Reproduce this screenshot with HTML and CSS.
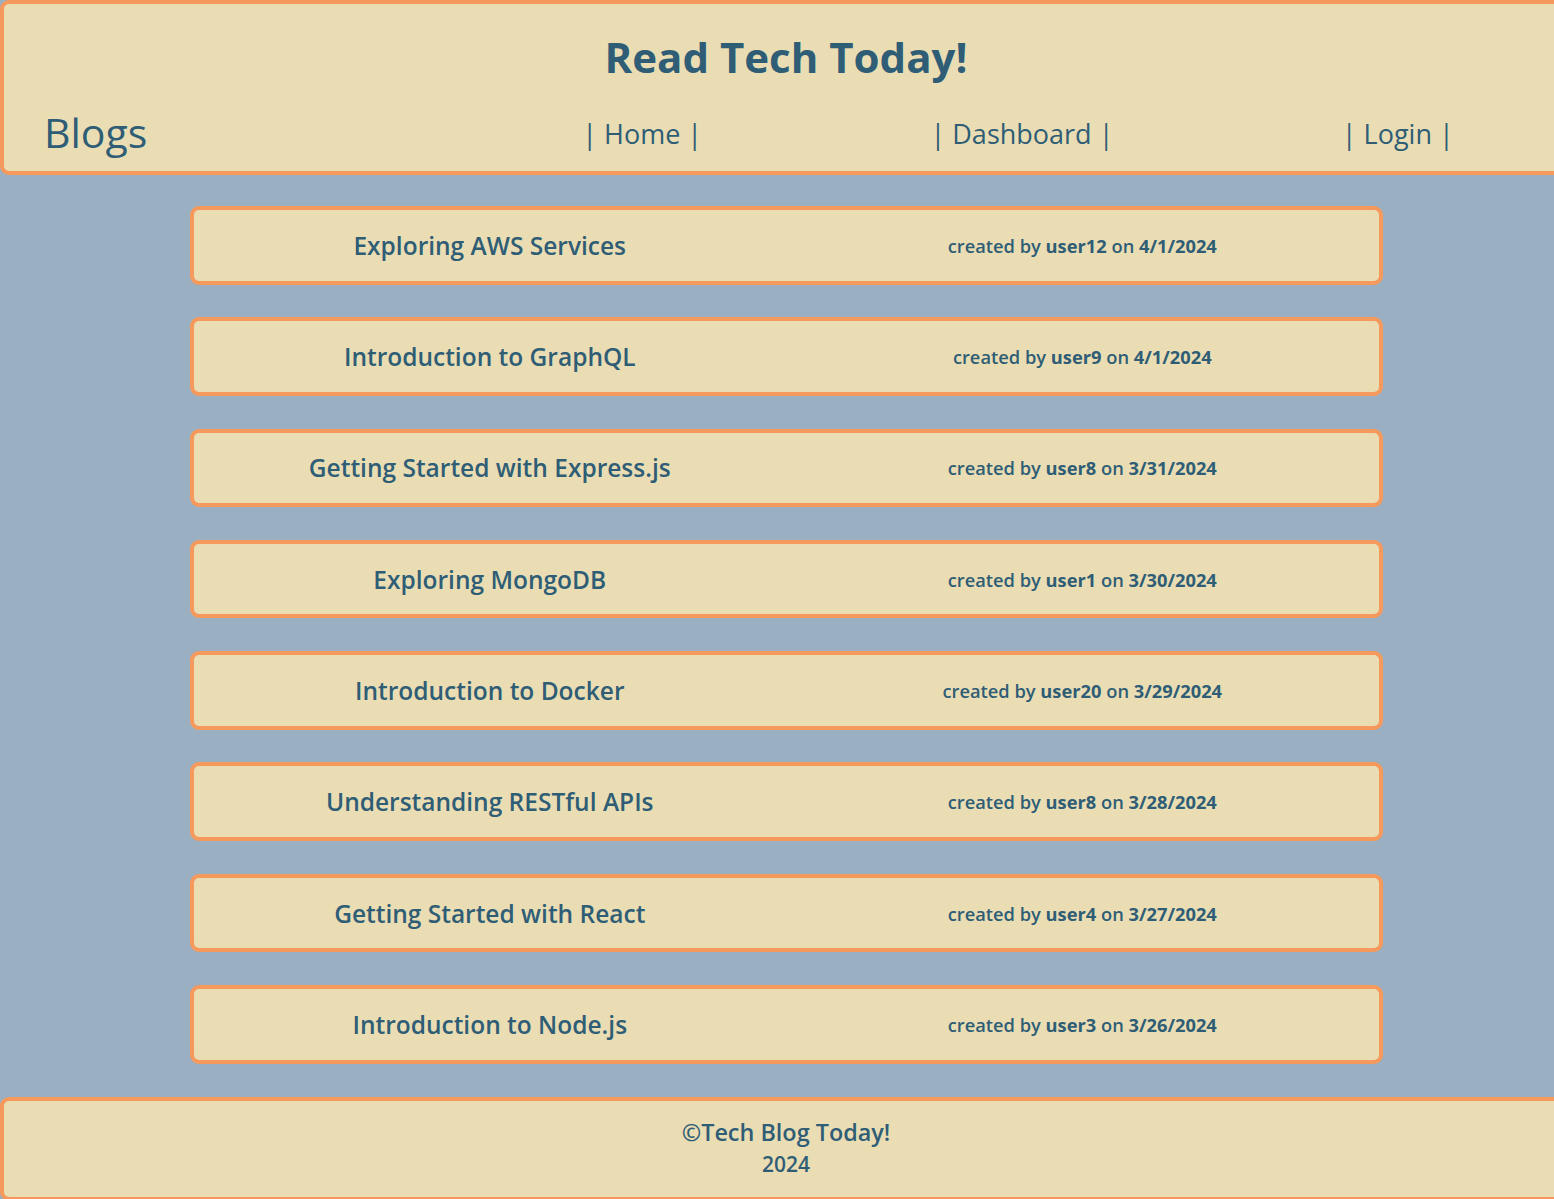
FILE: index.html
```html
<!DOCTYPE html>
<html>
<head>
<meta charset="utf-8">
<title>Read Tech Today!</title>
<link rel="stylesheet" href="styles.css">
</head>
<body>
<div class="page">
  <header class="site-header">
    <h1 class="site-title">Read Tech Today!</h1>
    <nav class="nav">
      <h2 class="nav-brand">Blogs</h2>
      <div class="nav-links">
        <a class="nav-link" href="#">| Home |</a>
        <a class="nav-link" href="#">| Dashboard |</a>
        <a class="nav-link" href="#">| Login |</a>
      </div>
    </nav>
  </header>
  <main class="posts">
    <article class="post"><h3 class="post-title">Exploring AWS Services</h3><p class="post-meta">created by <b>user12</b> on <b>4/1/2024</b></p></article>
    <article class="post"><h3 class="post-title">Introduction to GraphQL</h3><p class="post-meta">created by <b>user9</b> on <b>4/1/2024</b></p></article>
    <article class="post"><h3 class="post-title">Getting Started with Express.js</h3><p class="post-meta">created by <b>user8</b> on <b>3/31/2024</b></p></article>
    <article class="post"><h3 class="post-title">Exploring MongoDB</h3><p class="post-meta">created by <b>user1</b> on <b>3/30/2024</b></p></article>
    <article class="post"><h3 class="post-title">Introduction to Docker</h3><p class="post-meta">created by <b>user20</b> on <b>3/29/2024</b></p></article>
    <article class="post"><h3 class="post-title">Understanding RESTful APIs</h3><p class="post-meta">created by <b>user8</b> on <b>3/28/2024</b></p></article>
    <article class="post"><h3 class="post-title">Getting Started with React</h3><p class="post-meta">created by <b>user4</b> on <b>3/27/2024</b></p></article>
    <article class="post"><h3 class="post-title">Introduction to Node.js</h3><p class="post-meta">created by <b>user3</b> on <b>3/26/2024</b></p></article>
  </main>
  <footer class="site-footer">
    <p class="footer-name">©Tech Blog Today!</p>
    <p class="footer-year">2024</p>
  </footer>
</div>
</body>
</html>
```
FILE: styles.css
```css
html, body {
  margin: 0;
  padding: 0;
  overflow-x: hidden;
}
body {
  background: #9aafc2;
  font-family: "Open Sans", "Noto Sans", sans-serif;
  color: #2f5d76;
}
.page {
  width: 1572px;
}
.site-header {
  background: #eaddb4;
  border: 4px solid #f59a5c;
  border-radius: 9px;
  box-sizing: border-box;
  height: 175px;
}
.site-title {
  margin: 0;
  padding-top: 28px;
  text-align: center;
  font-size: 42px;
  font-weight: 700;
  line-height: 50px;
}
.nav {
  display: grid;
  grid-template-columns: 464px 1fr;
  align-items: center;
  margin-top: 23px;
}
.nav-brand {
  margin: 0;
  padding-left: 40px;
  font-size: 41px;
  font-weight: 400;
  line-height: 54px;
}
.nav-links {
  display: flex;
  justify-content: space-around;
  padding-top: 3px;
}
.nav-link {
  color: inherit;
  text-decoration: none;
  font-size: 27px;
  line-height: 40px;
}
.posts {
  display: flex;
  flex-direction: column;
  align-items: center;
  gap: 32.8px;
  padding: 31px 0 33px;
}
.post {
  box-sizing: border-box;
  width: 1193px;
  height: 78.5px;
  background: #eaddb4;
  border: 4px solid #f59a5c;
  border-radius: 9px;
  display: grid;
  grid-template-columns: 1fr 1fr;
  align-items: center;
  text-align: center;
}
.post-title {
  margin: 0;
  font-size: 24.5px;
  font-weight: 600;
}
.post-meta {
  margin: 0;
  font-size: 18.3px;
  font-weight: 600;
}
.post-meta b {
  font-weight: 700;
}
.site-footer {
  box-sizing: border-box;
  background: #eaddb4;
  border: 4px solid #f59a5c;
  border-radius: 9px;
  height: 104px;
  padding-bottom: 4px;
  display: flex;
  flex-direction: column;
  align-items: center;
  justify-content: center;
}
.footer-name {
  margin: 0 0 2px;
  font-size: 23.4px;
  font-weight: 600;
}
.footer-year {
  margin: 0;
  font-size: 21px;
  font-weight: 600;
}
```
